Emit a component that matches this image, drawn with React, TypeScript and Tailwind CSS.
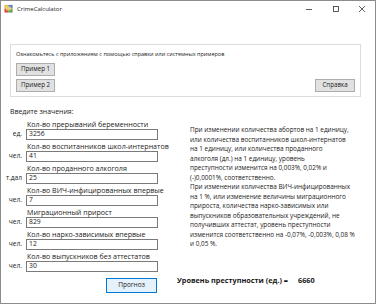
import React from 'react';

const fields = [
  { unit: 'ед.', label: 'Кол-во прерываний беременности', value: '3256' },
  { unit: 'чел.', label: 'Кол-во воспитанников школ-интернатов', value: '41' },
  { unit: 'т.дал', label: 'Кол-во проданного алкоголя', value: '25' },
  { unit: 'чел.', label: 'Кол-во ВИЧ-инфицированных впервые', value: '7' },
  { unit: 'чел.', label: 'Миграционный прирост', value: '829' },
  { unit: 'чел.', label: 'Кол-во нарко-зависимых впервые', value: '12' },
  { unit: 'чел.', label: 'Кол-во выпускников без аттестатов', value: '30' },
];

const lines = [
  'При изменении количества абортов на 1 единицу,',
  'или количества воспитанников школ-интернатов',
  'на 1 единицу, или количества проданного',
  'алкоголя (дл.) на 1 единицу, уровень',
  'преступности изменится на 0,003%, 0,02% и',
  '(-)0,0001%, соответственно.',
  'При изменении количества ВИЧ-инфицированных',
  'на 1 %, или изменение величины миграционного',
  'прироста, количества нарко-зависимых или',
  'выпускников образовательных учреждений, не',
  'получивших аттестат, уровень преступности',
  'изменится соответственно на -0,07%, -0,003%, 0,08 %',
  'и 0,05 %.',
];

const WinButton = ({ children, className = '' }: { children: React.ReactNode; className?: string }) => (
  <div
    className={`flex items-center justify-center h-[13px] border border-[#adadad] bg-[#e1e1e1] text-[6.2px] leading-none ${className}`}
  >
    {children}
  </div>
);

const App = () => {
  return (
    <div className="w-[376px] h-[304px] bg-white border border-[#8c8c8c] flex flex-col overflow-hidden font-['Open_Sans',sans-serif] text-[#1a1a1a]">
      {/* Title bar */}
      <div className="h-[15px] flex items-center pl-[3px] shrink-0">
        <svg width="9" height="9" viewBox="0 0 9 9">
          <rect x="0" y="0" width="9" height="9" fill="#f3f3f3" />
          <rect x="0.5" y="1" width="4" height="3" fill="#e8c34a" />
          <rect x="4.5" y="1" width="4" height="3" fill="#4a7fd0" />
          <rect x="0.5" y="4.5" width="4" height="4" fill="#d84a3a" />
          <rect x="4.5" y="4.5" width="4" height="4" fill="#5aa04a" />
          <rect x="2" y="2.5" width="5" height="4" fill="#f6d870" opacity="0.8" />
        </svg>
        <span className="ml-[4px] text-[6px] leading-none">CrimeCalculator</span>
        <div className="ml-auto flex items-center">
          <svg width="26" height="10" viewBox="0 0 26 10">
            <line x1="9" y1="5.5" x2="15" y2="5.5" stroke="#333" strokeWidth="0.8" />
          </svg>
          <svg width="26" height="10" viewBox="0 0 26 10">
            <rect x="10.5" y="2.5" width="5" height="5" fill="none" stroke="#333" strokeWidth="0.8" />
          </svg>
          <svg width="26" height="10" viewBox="0 0 26 10">
            <line x1="10" y1="2" x2="16" y2="8" stroke="#333" strokeWidth="0.8" />
            <line x1="16" y1="2" x2="10" y2="8" stroke="#333" strokeWidth="0.8" />
          </svg>
        </div>
      </div>

      {/* Help panel */}
      <div className="mt-[28px] ml-[9px] w-[351px] h-[53px] border border-[#dcdcdc] flex flex-col px-[5px] pt-[5px]">
        <div className="text-[5.5px] leading-[8px] whitespace-nowrap">
          Ознакомьтесь с приложением с помощью справки или системных примеров
        </div>
        <WinButton className="mt-[5px] w-[39px]">Пример 1</WinButton>
        <div className="mt-[3px] flex justify-between">
          <WinButton className="w-[39px]">Пример 2</WinButton>
          <WinButton className="w-[40px]">Справка</WinButton>
        </div>
      </div>

      {/* Input section */}
      <div className="flex flex-1">
        <div className="w-[160px] flex flex-col">
          <div className="mt-[11px] pl-[9px] text-[6.9px] leading-[8px]">Введите значения:</div>
          <div className="mt-[4px] flex flex-col gap-[2px]">
            {fields.map((f) => (
              <div key={f.label} className="flex flex-col">
                <div className="pl-[26px] text-[7.1px] leading-[9px] whitespace-nowrap">{f.label}</div>
                <div className="flex items-center">
                  <div className="w-[21px] text-right text-[6.6px] leading-none">{f.unit}</div>
                  <div className="ml-[4px] w-[132px] h-[11px] border border-[#7a7a7a] flex items-center pl-[2px] text-[6.8px] leading-none">
                    {f.value}
                  </div>
                </div>
              </div>
            ))}
          </div>
          <div className="mt-[6px] ml-[105px] w-[51px] h-[15px] border border-[#0078d7] bg-[#e5f1fb] flex items-center justify-center text-[6.5px] leading-none">
            Прогноз
          </div>
        </div>

        <div className="flex-1 flex flex-col pl-[16px]">
          <div className="mt-[28px] pl-[13px] text-[6.4px] leading-[9.5px] whitespace-nowrap">
            {lines.map((l) => (
              <div key={l}>{l}</div>
            ))}
          </div>
          <div className="mt-[28px] flex items-center text-[7.3px] font-bold leading-none whitespace-nowrap">
            <span>Уровень преступности (ед.) =</span>
            <span className="ml-[10px]">6660</span>
          </div>
        </div>
      </div>
    </div>
  );
};

export default App;
